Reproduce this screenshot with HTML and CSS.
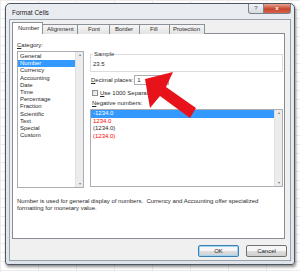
FILE: index.html
```html
<!DOCTYPE html>
<html lang="en">
<head>
    <meta charset="UTF-8">
    <title>Format Cells</title>
    <link rel="stylesheet" href="styles.css">
</head>
<body>

    <div class="dialog">
        <div class="titlebar">
            <span class="title">Format Cells</span>
            <div class="caption-btns">
                <span class="cap-help">?</span>
                <span class="cap-close">x</span>
            </div>
        </div>

        <div class="client">
            <div class="tabs">
                <span class="tab active">Number</span>
                <span class="tab w-align">Alignment</span>
                <span class="tab w-font">Font</span>
                <span class="tab w-border">Border</span>
                <span class="tab w-fill">Fill</span>
                <span class="tab w-prot">Protection</span>
            </div>

            <div class="panel">
                <div class="columns">
                    <div class="left-col">
                        <div class="lbl"><u>C</u>ategory:</div>
                        <div class="listbox cat-list">
                            <ul class="items">
                                <li>General</li>
                                <li class="sel">Number</li>
                                <li>Currency</li>
                                <li>Accounting</li>
                                <li>Date</li>
                                <li>Time</li>
                                <li>Percentage</li>
                                <li>Fraction</li>
                                <li>Scientific</li>
                                <li>Text</li>
                                <li>Special</li>
                                <li>Custom</li>
                            </ul>
                            <div class="vscroll">
                                <span class="arr">&#9652;</span>
                                <span class="arr">&#9662;</span>
                            </div>
                        </div>
                    </div>

                    <div class="right-col">
                        <fieldset class="sample">
                            <legend>Sample</legend>
                            <div class="sample-val">23.5</div>
                        </fieldset>

                        <div class="row decimals">
                            <span><u>D</u>ecimal places:</span>
                            <div class="spin">
                                <span class="spin-val">1</span>
                                <span class="spin-btn">&#8597;</span>
                            </div>
                        </div>

                        <div class="row check-row">
                            <span class="checkbox"></span>
                            <span><u>U</u>se 1000 Separator (,)</span>
                        </div>

                        <div class="lbl neg-lbl"><u>N</u>egative numbers:</div>
                        <div class="listbox neg-list">
                            <ul class="items">
                                <li class="sel">-1234.0</li>
                                <li class="red">1234.0</li>
                                <li>(1234.0)</li>
                                <li class="red">(1234.0)</li>
                            </ul>
                            <div class="vscroll">
                                <span class="arr">&#9652;</span>
                                <span class="arr">&#9662;</span>
                            </div>
                        </div>
                    </div>
                </div>

                <p class="desc">Number is used for general display of numbers.&nbsp; Currency and Accounting offer specialized formatting for monetary value.</p>
            </div>

            <div class="buttons">
                <button class="btn default">OK</button>
                <button class="btn">Cancel</button>
            </div>
        </div>
    </div>

    <svg class="arrow" width="300" height="272" viewBox="0 0 300 272">
        <polygon points="145,79 173,72 166,87 196,108 190,118 160,96 150,108" fill="#e8121a"/>
    </svg>

</body>
</html>
```

FILE: styles.css
```css
body {
    margin: 0;
    width: 300px;
    height: 272px;
    overflow: hidden;
    position: relative;
    font-family: "Liberation Sans", Arial, sans-serif;
    font-size: 6px;
    color: #2a2a2a;
    background-color: #fff;
    background-image:
        linear-gradient(to right, #ececec 1px, transparent 1px),
        linear-gradient(to bottom, #ececec 1px, transparent 1px);
    background-size: 38px 100%, 100% 9px;
}
ul {
    list-style: none;
    margin: 0;
    padding: 0;
}
u {
    text-decoration: underline;
}
.dialog {
    margin: 3px 0 0 5px;
    width: 290px;
    height: 262px;
    box-sizing: border-box;
    border: 1px solid #4e5663;
    border-radius: 5px 5px 3px 3px;
    background: linear-gradient(#e9edf2, #dfe4ea);
    box-shadow: 1px 2px 3px rgba(0, 0, 0, 0.45);
    padding: 0 3px 3px;
    display: flex;
    flex-direction: column;
}
.titlebar {
    height: 15px;
    display: flex;
    justify-content: space-between;
}
.title {
    padding: 5px 0 0 3px;
    font-size: 6.5px;
    color: #222;
}
.caption-btns {
    display: flex;
    height: 9px;
}
.cap-help, .cap-close {
    height: 9px;
    line-height: 9px;
    text-align: center;
    border: 1px solid #7b828c;
    border-top: none;
    font-size: 6px;
}
.cap-help {
    width: 14px;
    background: linear-gradient(#f0f3f6, #d6dbe1);
    border-radius: 0 0 0 3px;
    color: #555;
}
.cap-close {
    width: 26px;
    border-left: none;
    background: linear-gradient(#e9a493, #c7462e 55%, #d5634a);
    border-radius: 0 0 3px 0;
    color: #fff;
    font-weight: bold;
}
.client {
    flex: 1;
    background: #f0f0f0;
    border: 1px solid #98a2ad;
    padding: 2px 3px 3px 2px;
    display: flex;
    flex-direction: column;
}
.tabs {
    height: 12px;
    display: flex;
    align-items: flex-end;
    position: relative;
    z-index: 1;
}
.tab {
    height: 10px;
    box-sizing: border-box;
    border: 1px solid #8c9098;
    border-bottom: none;
    border-left: none;
    background: linear-gradient(#f5f5f5, #e3e3e3);
    padding-left: 4px;
    line-height: 9px;
}
.tab.active {
    width: 31px;
    height: 12px;
    border-left: 1px solid #8c9098;
    background: #fff;
    padding-left: 5px;
    line-height: 11px;
}
.w-align { width: 35px; }
.w-font { width: 32px; padding-left: 10px; }
.w-border { width: 30px; padding-left: 5px; }
.w-fill { width: 30px; padding-left: 10px; }
.w-prot { width: 35px; padding-left: 3px; }
.panel {
    height: 206px;
    box-sizing: border-box;
    margin-top: -1px;
    width: 273px;
    border: 1px solid #898c95;
    background: #fff;
    padding: 8px 1px 0 4px;
}
.columns {
    display: flex;
    gap: 6px;
}
.left-col {
    width: 67px;
}
.right-col {
    flex: 1;
    padding-top: 9px;
}
.lbl {
    line-height: 7px;
    margin-bottom: 2px;
}
.listbox {
    box-sizing: border-box;
    border: 1px solid #abadb3;
    display: flex;
    background: #fff;
}
.cat-list {
    height: 137px;
}
.neg-list {
    height: 78px;
}
.items {
    flex: 1;
    padding-top: 1px;
}
.items li {
    height: 7.2px;
    line-height: 7.2px;
    padding-left: 2px;
}
.items li.sel {
    background: #3399ff;
    color: #fff;
}
.neg-list .items {
    padding-top: 0;
}
.neg-list .items li {
    height: 7.5px;
    line-height: 7.5px;
}
.items li.red {
    color: #ff0000;
}
.vscroll {
    width: 7px;
    background: #ececec;
    border-left: 1px solid #e0e0e0;
    display: flex;
    flex-direction: column;
    justify-content: space-between;
    align-items: center;
    color: #777;
    font-size: 4px;
    line-height: 6px;
}
.sample {
    margin: 0;
    height: 21px;
    box-sizing: border-box;
    border: 1px solid #dcdcdc;
    padding: 0 2px 2px;
}
.sample legend {
    padding: 0 1px;
    line-height: 7px;
}
.sample-val {
    margin-top: 3px;
    line-height: 7px;
}
.row {
    display: flex;
    align-items: center;
}
.decimals {
    margin-top: 3px;
    height: 10px;
    gap: 1px;
    padding-left: 1px;
}
.spin {
    width: 35px;
    height: 10px;
    box-sizing: border-box;
    border: 1px solid #abadb3;
    display: flex;
    align-items: center;
}
.spin-val {
    padding-left: 2px;
    width: 12px;
}
.spin-btn {
    font-size: 7px;
    color: #444;
}
.check-row {
    margin-top: 4px;
    height: 8px;
    gap: 2px;
    padding-left: 2px;
}
.checkbox {
    width: 6px;
    height: 6px;
    box-sizing: border-box;
    border: 1px solid #8f8f8f;
    background: linear-gradient(135deg, #dcdcdc, #fafafa);
}
.neg-lbl {
    margin-top: 3px;
    padding-left: 2px;
}
.desc {
    margin: 10px 0 0;
    line-height: 7px;
    width: 250px;
}
.buttons {
    margin-top: 6px;
    display: flex;
    justify-content: flex-end;
    gap: 7px;
}
.btn {
    width: 41px;
    height: 12px;
    padding: 0;
    font-family: "Liberation Sans", Arial, sans-serif;
    font-size: 6px;
    color: #222;
    border: 1px solid #707070;
    border-radius: 2px;
    background: linear-gradient(#f6f6f6 45%, #dddddd 55%, #cfcfcf);
}
.btn.default {
    border-color: #3c7fb1;
    box-shadow: inset 0 0 0 1px #9fd6f5;
}
.arrow {
    position: absolute;
    left: 0;
    top: 0;
}
```
